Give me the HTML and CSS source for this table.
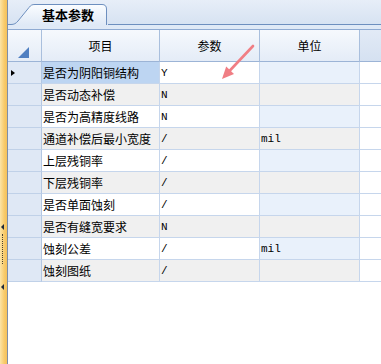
FILE: index.html
```html
<!DOCTYPE html>
<html lang="zh-CN">
<head>
<meta charset="utf-8">
<title>基本参数</title>
<link rel="stylesheet" href="styles.css">
</head>
<body>
<div class="app">
  <div class="splitter">
    <span class="grip-arrow"></span>
    <span class="grip-dots"></span>
    <span class="grip-arrow"></span>
  </div>
  <div class="main">
    <div class="tabstrip">
      <div class="strip-line lead"></div>
      <div class="tab">
        <svg class="tab-shape" width="97" height="25" viewBox="0 0 97 25">
          <defs>
            <linearGradient id="tabfill" x1="0" y1="0" x2="0" y2="1">
              <stop offset="0" stop-color="#fbfdff"/>
              <stop offset="1" stop-color="#dfe9f6"/>
            </linearGradient>
          </defs>
          <path d="M0,25 L0,24.5 C3,24.5 5,23.5 7,21 L18,7.5 C20,5 21,4.5 24,4.5 L91,4.5 Q95.5,4.5 95.5,9 L95.5,25 Z" fill="url(#tabfill)"/>
          <path d="M0,24.5 C3,24.5 5,23.5 7,21 L18,7.5 C20,5 21,4.5 24,4.5 L91,4.5 Q95.5,4.5 95.5,9 L95.5,25" fill="none" stroke="#6d8fbf" stroke-width="1"/>
        </svg>
        <span class="tab-label">基本参数</span>
      </div>
      <div class="strip-line rest"></div>
    </div>
    <div class="tab-gap"></div>
    <div class="grid-wrap">
      <div class="grid">
        <div class="row head">
          <div class="cell corner"><span class="corner-tri"></span></div>
          <div class="cell hcell">项目</div>
          <div class="cell hcell">参数</div>
          <div class="cell hcell">单位</div>
          <div class="cell hfill"></div>
        </div>
        <div class="row odd">
          <div class="cell ind"><span class="cur"></span></div>
          <div class="cell name selected">是否为阴阳铜结构</div>
          <div class="cell val">Y</div>
          <div class="cell unit"></div>
          <div class="cell fill"></div>
        </div>
        <div class="row even">
          <div class="cell ind"></div>
          <div class="cell name">是否动态补偿</div>
          <div class="cell val">N</div>
          <div class="cell unit"></div>
          <div class="cell fill"></div>
        </div>
        <div class="row odd">
          <div class="cell ind"></div>
          <div class="cell name">是否为高精度线路</div>
          <div class="cell val">N</div>
          <div class="cell unit"></div>
          <div class="cell fill"></div>
        </div>
        <div class="row even">
          <div class="cell ind"></div>
          <div class="cell name">通道补偿后最小宽度</div>
          <div class="cell val">/</div>
          <div class="cell unit">mil</div>
          <div class="cell fill"></div>
        </div>
        <div class="row odd">
          <div class="cell ind"></div>
          <div class="cell name">上层残铜率</div>
          <div class="cell val">/</div>
          <div class="cell unit"></div>
          <div class="cell fill"></div>
        </div>
        <div class="row even">
          <div class="cell ind"></div>
          <div class="cell name">下层残铜率</div>
          <div class="cell val">/</div>
          <div class="cell unit"></div>
          <div class="cell fill"></div>
        </div>
        <div class="row odd">
          <div class="cell ind"></div>
          <div class="cell name">是否单面蚀刻</div>
          <div class="cell val">/</div>
          <div class="cell unit"></div>
          <div class="cell fill"></div>
        </div>
        <div class="row even">
          <div class="cell ind"></div>
          <div class="cell name">是否有缝宽要求</div>
          <div class="cell val">N</div>
          <div class="cell unit"></div>
          <div class="cell fill"></div>
        </div>
        <div class="row odd">
          <div class="cell ind"></div>
          <div class="cell name">蚀刻公差</div>
          <div class="cell val">/</div>
          <div class="cell unit">mil</div>
          <div class="cell fill"></div>
        </div>
        <div class="row even">
          <div class="cell ind"></div>
          <div class="cell name">蚀刻图纸</div>
          <div class="cell val">/</div>
          <div class="cell unit"></div>
          <div class="cell fill"></div>
        </div>
      </div>
      <svg class="annot-arrow" width="381" height="100" viewBox="0 0 381 100">
        <line x1="253" y1="46" x2="228" y2="72.5" stroke="#f07e84" stroke-width="2.6" stroke-linecap="round"/>
        <polygon points="222,79 226.2,66.6 234,74" fill="#f07e84"/>
      </svg>
    </div>
  </div>
</div>
</body>
</html>
```

FILE: styles.css
```css
html, body {
  margin: 0;
  padding: 0;
}
body {
  width: 381px;
  height: 364px;
  overflow: hidden;
  background: #ffffff;
  font-family: "Noto Sans CJK SC", "Noto Sans", sans-serif;
  font-size: 12px;
  color: #000;
}
.app {
  display: flex;
  height: 364px;
}
.splitter {
  width: 7px;
  border-right: 1px solid #7f8ea6;
  background: linear-gradient(to right, #fce4a6, #f8cb6c 60%, #f5c159);
  display: flex;
  flex-direction: column;
  align-items: flex-start;
  padding-top: 224px;
  box-sizing: content-box;
}
.grip-arrow {
  width: 0;
  height: 0;
  margin-left: 1px;
  border-top: 3.5px solid transparent;
  border-bottom: 3.5px solid transparent;
  border-right: 3.5px solid #1f2a3a;
}
.grip-dots {
  width: 0;
  height: 30px;
  margin: 4px 0 20px 2px;
  border-left: 1.5px dotted #4a4230;
}
.main {
  flex: 1;
  display: flex;
  flex-direction: column;
  min-width: 0;
}
.tabstrip {
  height: 25px;
  display: flex;
  align-items: stretch;
  background: linear-gradient(#e7eef8, #d6e2f2);
}
.strip-line {
  border-bottom: 1px solid #6d8fbf;
  box-sizing: border-box;
}
.strip-line.lead {
  width: 3px;
}
.strip-line.rest {
  flex: 1;
}
.tab {
  width: 97px;
  display: grid;
}
.tab-shape {
  grid-area: 1 / 1;
  display: block;
}
.tab-label {
  grid-area: 1 / 1;
  align-self: center;
  padding: 4px 0 0 31px;
  font-weight: bold;
  font-size: 13px;
  line-height: 16px;
  color: #000;
}
.tab-gap {
  height: 4px;
  background: #dfe9f6;
}
.grid-wrap {
  position: relative;
}
.grid {
  border-top: 1px solid #8eaad2;
}
.row {
  display: grid;
  grid-template-columns: 34px 118px 100px 100px 1fr;
  height: 22px;
}
.row.head {
  height: 32px;
}
.cell {
  box-sizing: border-box;
  border-right: 1px solid #c6d6ec;
  border-bottom: 1px solid #c6d6ec;
  display: flex;
  align-items: center;
  white-space: nowrap;
  overflow: hidden;
}
.row.head .cell {
  border-right-color: #a9bfdd;
  border-bottom-color: #9cb4d6;
  background: linear-gradient(#f6f9fd, #e4ecf7);
  justify-content: center;
}
.row.head .cell.hfill {
  background: linear-gradient(#e2eaf6, #d5e1f1);
  border-right: none;
}
.cell.corner {
  justify-content: flex-end;
  align-items: flex-end;
  padding: 0 2px 3px 0;
}
.corner-tri {
  width: 0;
  height: 0;
  border-left: 11px solid transparent;
  border-bottom: 11px solid #4f7fc1;
}
.cell.ind {
  background: #dfe8f5;
  border-right-color: #b3c7e2;
  border-bottom-color: #c0d1e8;
  padding-left: 3px;
}
.cur {
  width: 0;
  height: 0;
  border-top: 3.5px solid transparent;
  border-bottom: 3.5px solid transparent;
  border-left: 4px solid #000;
}
.cell.name {
  padding-left: 1px;
  color: #000;
}
.cell.val, .cell.unit {
  font-family: "Liberation Mono", "DejaVu Sans Mono", monospace;
  font-size: 11px;
  padding-left: 1px;
}
.cell.fill {
  border-right: none;
  background: #ffffff;
}
.row.odd .name, .row.odd .val {
  background: #ffffff;
}
.row.odd .unit {
  background: #e9f1fb;
}
.row.even .name, .row.even .val, .row.even .unit {
  background: #f0f0f0;
}
.cell.name.selected {
  background: #bdd5f2;
}
.annot-arrow {
  position: absolute;
  left: -8px;
  top: -29px;
  pointer-events: none;
}
```
